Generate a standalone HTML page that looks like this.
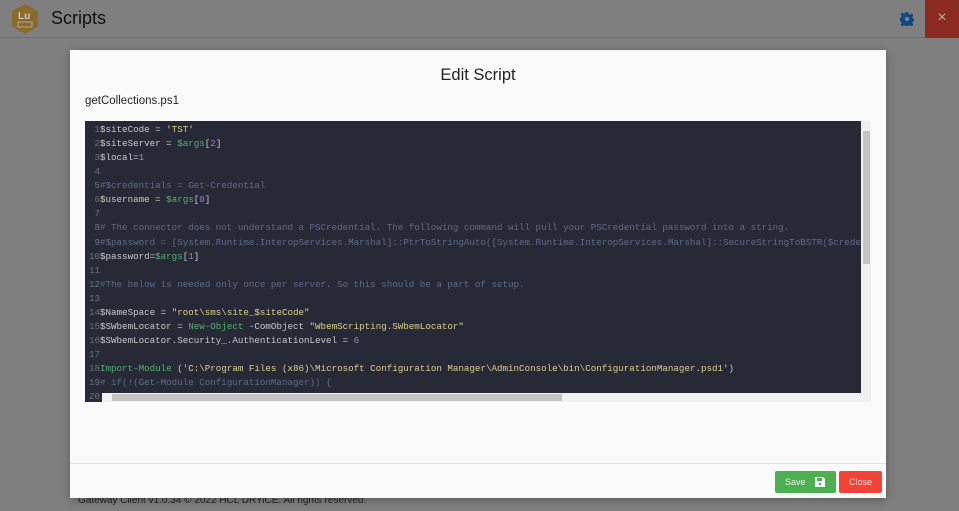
<!DOCTYPE html>
<html><head><meta charset="utf-8"><style>
*{margin:0;padding:0;box-sizing:border-box}
body{width:959px;height:511px;overflow:hidden;background:#7f7f7f;font-family:"Liberation Sans",sans-serif;position:relative}
.top{position:absolute;left:0;top:0;width:959px;height:38px;border-bottom:1px solid #707070;background:#7f7f7f}
.logo{position:absolute;left:11px;top:4px;width:28px;height:30px}
.title{position:absolute;left:51px;top:8px;font-size:18px;color:#111}
.gear{position:absolute;left:900px;top:12px;width:14px;height:14px}
.xbtn{position:absolute;left:925px;top:0;width:34px;height:38px;background:#8a2a20;color:#b0b0b0;font-size:16px;text-align:center;line-height:36px}
.foot{position:absolute;left:78px;top:495px;font-size:10px;color:#222}
.modal{position:absolute;left:70px;top:50px;width:816px;height:448px;background:#fafafa;box-shadow:0 2px 8px rgba(0,0,0,.3)}
.mh{position:absolute;left:0;top:16px;width:100%;text-align:center;font-size:16.5px;color:#222}
.fn{position:absolute;left:15px;top:45px;font-size:11.5px;color:#222}
.code{position:absolute;left:15px;top:71px;width:786px;height:281px;background:#272a36;overflow:hidden}
.lines{position:absolute;left:0;top:2px;font-family:"Liberation Mono",monospace;font-size:9.2px;line-height:14.06px;white-space:pre;color:#c8c8c8}
.n{display:inline-block;width:15px;text-align:right;color:#6b7080}
.s{color:#d8d08a}.v{color:#4fb36b}.c{color:#5f6a88}.m{color:#9d7fd8}.k{color:#4fb36b}
.vs{position:absolute;right:0;top:0;width:10px;height:272px;background:#f0f0f0}
.vt{position:absolute;left:2px;top:10px;width:7px;height:133px;background:#c4c4c4}
.hs{position:absolute;left:17px;bottom:0;width:769px;height:9px;background:#f0f0f0}
.ht{position:absolute;left:10px;top:1px;width:450px;height:7px;background:#c4c4c4}
.mf{position:absolute;left:0;top:413px;width:100%;border-top:1px solid #e2e2e2}
.btn{position:absolute;top:421px;height:22px;font-size:9px;color:#e8f4e8;line-height:22px;border-radius:2px}
.save{left:705px;width:61px;background:#4caf50;padding-left:10px}
.save svg{position:absolute;left:40px;top:6px}
.close{left:769px;width:43px;background:#f44336;text-align:center;color:#fbdcd8}
</style></head><body>
<div class="top">
<svg class="logo" viewBox="0 0 28 30"><polygon points="14,0 27,7.5 27,22.5 14,30 1,22.5 1,7.5" fill="#8c6a2a"/><text x="7" y="15" font-size="10" font-family="Liberation Sans" fill="#c8c8c8" font-weight="bold">Lu</text><rect x="7" y="18" width="14" height="5" fill="none" stroke="#b8b8b8" stroke-width=".8"/></svg>
<div class="title">Scripts</div>
<svg class="gear" viewBox="0 0 14 14"><path d="M5.8 0h2.4l.4 2 1.4.6 1.7-1.1 1.7 1.7-1.1 1.7.6 1.4 2 .4v2.4l-2 .4-.6 1.4 1.1 1.7-1.7 1.7-1.7-1.1-1.4.6-.4 2H5.8l-.4-2-1.4-.6-1.7 1.1-1.7-1.7 1.1-1.7-.6-1.4-2-.4V5.8l2-.4.6-1.4-1.1-1.7 1.7-1.7 1.7 1.1 1.4-.6z" fill="#0d4a85"/><circle cx="7" cy="7" r="2.2" fill="#7f7f7f"/></svg>
<div class="xbtn">×</div>
</div>
<div class="foot">Gateway Client v1.0.34 © 2022 HCL DRYiCE. All rights reserved.</div>
<div class="modal">
<div class="mh">Edit Script</div>
<div class="fn">getCollections.ps1</div>
<div class="code"><div class="lines"><span class="n">1</span>$siteCode = <span class="s">'TST'</span>
<span class="n">2</span>$siteServer = <span class="v">$args</span>[<span class="m">2</span>]
<span class="n">3</span>$local=<span class="m">1</span>
<span class="n">4</span>
<span class="n">5</span><span class="c">#$credentials = Get-Credential</span>
<span class="n">6</span>$username = <span class="v">$args</span>[<span class="m">0</span>]
<span class="n">7</span>
<span class="n">8</span><span class="c"># The connector does not understand a PSCredential. The following command will pull your PSCredential password into a string.</span>
<span class="n">9</span><span class="c">#$password = [System.Runtime.InteropServices.Marshal]::PtrToStringAuto([System.Runtime.InteropServices.Marshal]::SecureStringToBSTR($credentials.password))</span>
<span class="n">10</span>$password=<span class="v">$args</span>[<span class="m">1</span>]
<span class="n">11</span>
<span class="n">12</span><span class="c">#The below is needed only once per server. So this should be a part of setup.</span>
<span class="n">13</span>
<span class="n">14</span>$NameSpace = <span class="s">"root\sms\site_$siteCode"</span>
<span class="n">15</span>$SWbemLocator = <span class="k">New-Object</span> -ComObject <span class="s">"WbemScripting.SWbemLocator"</span>
<span class="n">16</span>$SWbemLocator.Security_.AuthenticationLevel = <span class="m">6</span>
<span class="n">17</span>
<span class="n">18</span><span class="k">Import-Module</span> (<span class="s">'C:\Program Files (x86)\Microsoft Configuration Manager\AdminConsole\bin\ConfigurationManager.psd1'</span>)
<span class="n">19</span><span class="c"># if(!(Get-Module ConfigurationManager)) {</span>
<span class="n">20</span></div>
<div class="vs"><div class="vt"></div></div>
<div class="hs"><div class="ht"></div></div>
</div>
<div class="mf"></div>
<div class="btn save">Save <svg width="10" height="10" viewBox="0 0 10 10"><path d="M0 0h8l2 2v8H0z" fill="#fff"/><rect x="2" y="1" width="5" height="3" fill="#4caf50"/><circle cx="5" cy="7" r="1.3" fill="#4caf50"/></svg></div>
<div class="btn close">Close</div>
</div>
</body></html>
